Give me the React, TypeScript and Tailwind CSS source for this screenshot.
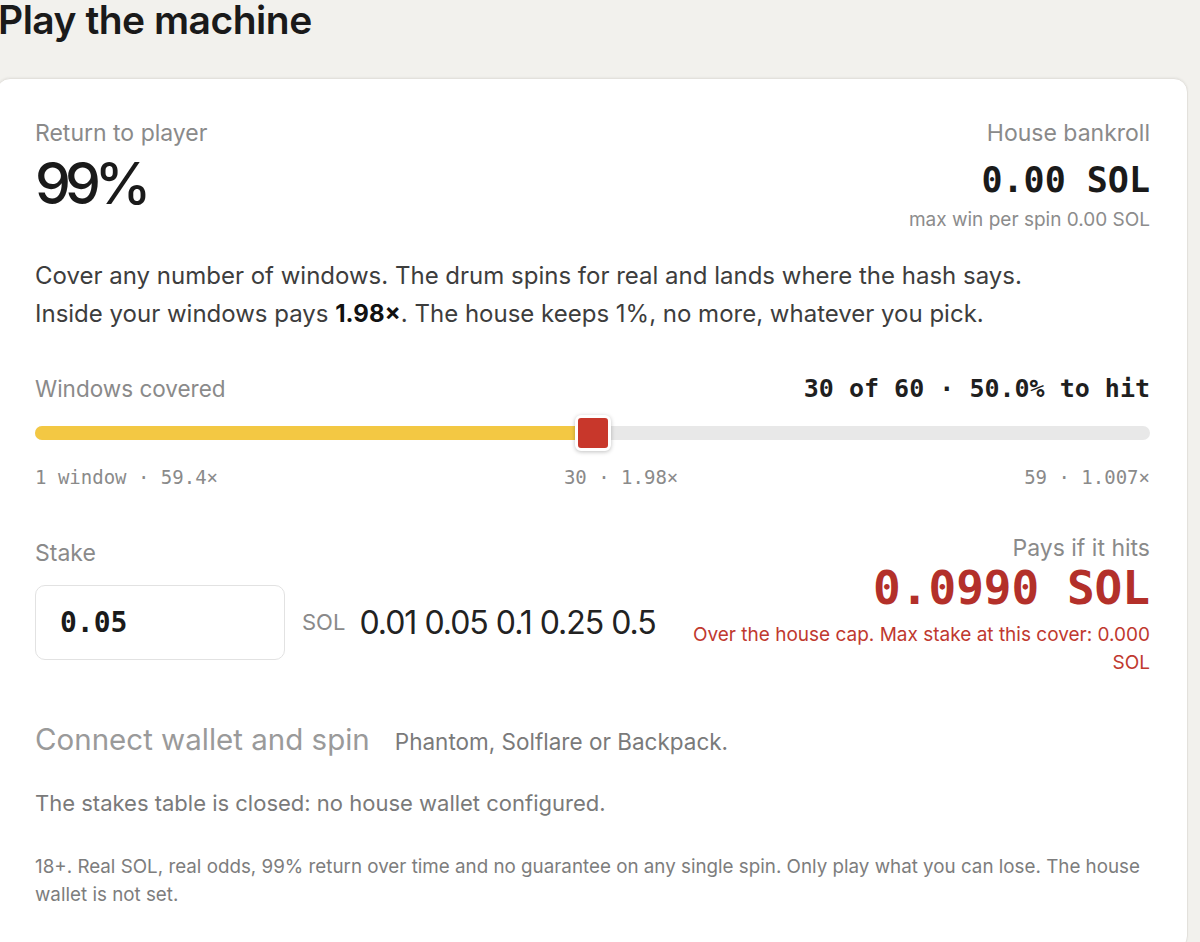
export default function App() {
  const chips = ["0.01", "0.05", "0.1", "0.25", "0.5"];
  const pct = 50;

  return (
    <div className="min-h-[942px] bg-[#f2f1ed] text-[#1a1a1a] overflow-hidden font-['Inter',sans-serif]">
      <h1 className="text-[39px] leading-[40px] font-semibold tracking-[-0.5px] -ml-[2px]">
        Play the machine
      </h1>

      <div className="mt-[38px] -ml-[4px] w-[1192px] bg-white border border-[#e3e1dc] rounded-[14px] shadow-[0_-1px_2px_rgba(0,0,0,0.04)] pl-[38px] pr-[37px] pt-[39px] pb-[40px]">
        {/* Stats */}
        <div className="flex justify-between items-start">
          <div>
            <div className="text-[23px] leading-[30px] text-[#8a8a8a]">Return to player</div>
            <div className="text-[57px] leading-[60px] font-medium tracking-[-6px] mt-[6px]">99%</div>
          </div>
          <div className="text-right">
            <div className="text-[23px] leading-[30px] text-[#8a8a8a]">House bankroll</div>
            <div className="font-['DejaVu_Sans_Mono',monospace] font-bold text-[35px] leading-[40px] mt-[12px]">
              0.00 SOL
            </div>
            <div className="text-[19px] leading-[26px] text-[#8c8c8c] mt-[7px]">max win per spin 0.00 SOL</div>
          </div>
        </div>

        <p className="mt-[24px] text-[24px] leading-[38px] text-[#3d3d3d]">
          Cover any number of windows. The drum spins for real and lands where the hash says.
          <br />
          Inside your windows pays <b className="font-bold text-[#111]">1.98×</b>. The house keeps 1%, no more, whatever you pick.
        </p>

        {/* Slider */}
        <div className="mt-[41px] flex justify-between items-center h-[30px]">
          <span className="text-[22.5px] leading-[30px] text-[#8a8a8a]">Windows covered</span>
          <span className="font-['DejaVu_Sans_Mono',monospace] font-bold text-[25px] leading-[30px] text-[#1f1f1f]">
            30 of 60 · 50.0% to hit
          </span>
        </div>
        <div className="relative mt-[22px] h-[14px] rounded-full bg-[#e8e8e8]">
          <div className="h-full rounded-full bg-[#f3c843]" style={{ width: `${pct}%` }} />
          <div
            className="absolute top-1/2 -translate-x-1/2 -translate-y-1/2 w-[36px] h-[36px] rounded-[6px] bg-[#c8372b] border-[3px] border-white shadow-[0_1px_4px_rgba(0,0,0,0.25)]"
            style={{ left: `${pct}%` }}
          />
        </div>
        <div className="mt-[24px] flex justify-between font-['DejaVu_Sans_Mono',monospace] text-[19px] leading-[26px] text-[#8a8a8a]">
          <span>1 window · 59.4×</span>
          <span>30 · 1.98×</span>
          <span>59 · 1.007×</span>
        </div>

        {/* Stake */}
        <div className="mt-[43px] flex justify-between items-start">
          <div className="pt-[5px]">
            <div className="text-[23px] leading-[30px] text-[#8a8a8a]">Stake</div>
            <div className="mt-[17px] flex items-center">
              <div className="w-[250px] h-[75px] border border-[#e2e2e2] rounded-[10px] flex items-center pl-[24px] font-['DejaVu_Sans_Mono',monospace] font-bold text-[28px]">
                0.05
              </div>
              <span className="ml-[17px] text-[22px] text-[#8a8a8a]">SOL</span>
              <div className="ml-[14px] flex gap-[8px] text-[32px] tracking-[-1px] text-[#222]">
                {chips.map((c) => (
                  <button key={c} className="leading-none">{c}</button>
                ))}
              </div>
            </div>
          </div>
          <div className="w-[462px] text-right">
            <div className="text-[23px] leading-[30px] text-[#8a8a8a]">Pays if it hits</div>
            <div className="font-['DejaVu_Sans_Mono',monospace] font-bold text-[46px] leading-[50px] text-[#b3302a]">
              0.0990 SOL
            </div>
            <div className="mt-[8px] text-[19px] leading-[28px] text-[#c0392f]">
              Over the house cap. Max stake at this cover: 0.000 SOL
            </div>
          </div>
        </div>

        {/* Connect */}
        <div className="mt-[44px] flex items-baseline gap-[25px]">
          <span className="text-[29.5px] leading-[36px] text-[#9a9a9a]">Connect wallet and spin</span>
          <span className="text-[22.5px] text-[#7a7a7a]">Phantom, Solflare or Backpack.</span>
        </div>
        <p className="mt-[29px] text-[22px] leading-[30px] text-[#7a7a7a]">
          The stakes table is closed: no house wallet configured.
        </p>
        <p className="mt-[35px] text-[18.8px] leading-[28px] text-[#7d7d7d]">
          18+. Real SOL, real odds, 99% return over time and no guarantee on any single spin. Only play what you can lose. The house wallet is not set.
        </p>
      </div>
    </div>
  );
}
